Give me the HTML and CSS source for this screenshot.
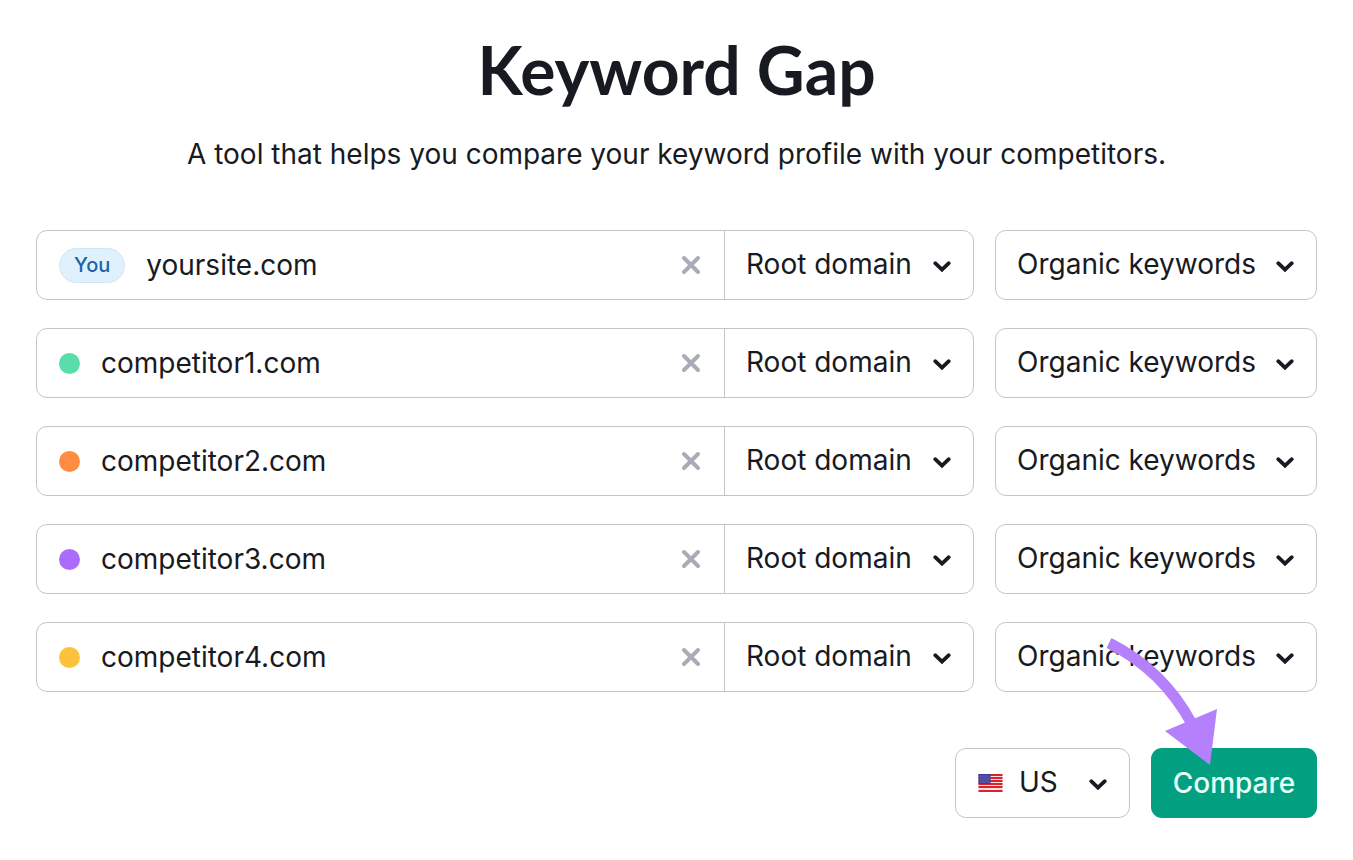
FILE: index.html
```html
<!DOCTYPE html>
<html lang="en">
<head>
    <meta charset="UTF-8">
    <meta name="viewport" content="width=device-width, initial-scale=1.0">
    <title>Keyword Gap</title>
    <link rel="stylesheet" href="styles.css">
</head>
<body>

<!-- shared icons -->
<svg class="sprite" aria-hidden="true">
    <symbol id="icon-close" viewBox="0 0 20 20">
        <path d="M3 3L17 17M17 3L3 17" fill="none" stroke="currentColor" stroke-width="4" stroke-linecap="round"/>
    </symbol>
    <symbol id="icon-chevron" viewBox="0 0 20 14">
        <path d="M3.2 3.2L10 9.6L16.8 3.2" fill="none" stroke="currentColor" stroke-width="3.8" stroke-linecap="round" stroke-linejoin="miter"/>
    </symbol>
</svg>

<main class="container">
    <h1>Keyword Gap</h1>
    <p class="subtitle">A tool that helps you compare your keyword profile with your competitors.</p>

    <form class="gap-form">
        <div class="row">
            <div class="domain">
                <label class="badge" for="domain-you">You</label>
                <input type="text" id="domain-you" value="yoursite.com">
                <button type="button" class="clear" aria-label="Clear"><svg><use href="#icon-close"/></svg></button>
                <div class="select scope">
                    <select aria-label="Scope"><option>Root domain</option></select>
                    <svg class="chevron"><use href="#icon-chevron"/></svg>
                </div>
            </div>
            <div class="select box">
                <select aria-label="Keyword type"><option>Organic keywords</option></select>
                <svg class="chevron"><use href="#icon-chevron"/></svg>
            </div>
        </div>

        <div class="row">
            <div class="domain">
                <label class="dot green" for="domain-1" aria-label="Competitor 1"></label>
                <input type="text" id="domain-1" value="competitor1.com">
                <button type="button" class="clear" aria-label="Clear"><svg><use href="#icon-close"/></svg></button>
                <div class="select scope">
                    <select aria-label="Scope"><option>Root domain</option></select>
                    <svg class="chevron"><use href="#icon-chevron"/></svg>
                </div>
            </div>
            <div class="select box">
                <select aria-label="Keyword type"><option>Organic keywords</option></select>
                <svg class="chevron"><use href="#icon-chevron"/></svg>
            </div>
        </div>

        <div class="row">
            <div class="domain">
                <label class="dot orange" for="domain-2" aria-label="Competitor 2"></label>
                <input type="text" id="domain-2" value="competitor2.com">
                <button type="button" class="clear" aria-label="Clear"><svg><use href="#icon-close"/></svg></button>
                <div class="select scope">
                    <select aria-label="Scope"><option>Root domain</option></select>
                    <svg class="chevron"><use href="#icon-chevron"/></svg>
                </div>
            </div>
            <div class="select box">
                <select aria-label="Keyword type"><option>Organic keywords</option></select>
                <svg class="chevron"><use href="#icon-chevron"/></svg>
            </div>
        </div>

        <div class="row">
            <div class="domain">
                <label class="dot purple" for="domain-3" aria-label="Competitor 3"></label>
                <input type="text" id="domain-3" value="competitor3.com">
                <button type="button" class="clear" aria-label="Clear"><svg><use href="#icon-close"/></svg></button>
                <div class="select scope">
                    <select aria-label="Scope"><option>Root domain</option></select>
                    <svg class="chevron"><use href="#icon-chevron"/></svg>
                </div>
            </div>
            <div class="select box">
                <select aria-label="Keyword type"><option>Organic keywords</option></select>
                <svg class="chevron"><use href="#icon-chevron"/></svg>
            </div>
        </div>

        <div class="row">
            <div class="domain">
                <label class="dot yellow" for="domain-4" aria-label="Competitor 4"></label>
                <input type="text" id="domain-4" value="competitor4.com">
                <button type="button" class="clear" aria-label="Clear"><svg><use href="#icon-close"/></svg></button>
                <div class="select scope">
                    <select aria-label="Scope"><option>Root domain</option></select>
                    <svg class="chevron"><use href="#icon-chevron"/></svg>
                </div>
            </div>
            <div class="select box">
                <select aria-label="Keyword type"><option>Organic keywords</option></select>
                <svg class="chevron"><use href="#icon-chevron"/></svg>
            </div>
        </div>

        <div class="actions">
            <div class="select box country">
                <svg class="flag" viewBox="0 0 24 18" aria-hidden="true">
                    <rect width="24" height="18" fill="#f6dfe2"/>
                    <path d="M0 1H24M0 4H24M0 7H24M0 10H24M0 13H24M0 17H24" stroke="#d8222c" stroke-width="2"/>
                    <rect width="12" height="10" fill="#3a3a98"/>
                    <path d="M1 2H11M2 4H11M1 6H11M2 8H11" stroke="#8f90cf" stroke-dasharray="1 1"/>
                </svg>
                <select aria-label="Country"><option>US</option></select>
                <svg class="chevron"><use href="#icon-chevron"/></svg>
            </div>
            <div class="submit">
                <button type="submit" class="compare">Compare</button>
                <svg class="arrow" viewBox="0 0 125 140" aria-hidden="true">
                    <path d="M9 13Q63 40 92 94" fill="none" stroke="#b580fc" stroke-width="11"/>
                    <path d="M65 101L117 79L110 135Z" fill="#b580fc"/>
                </svg>
            </div>
        </div>
    </form>
</main>

</body>
</html>
```

FILE: styles.css
```css
*{
    box-sizing:border-box;
}
body{
    margin:0;
    background-color:#fff;
    color:#181a22;
    font-family:Inter, "Liberation Sans", sans-serif;
    font-size:28px;
    font-weight:400;
}
.sprite{
    display:none;
}
.container{
    padding:30px 36px;
}
h1{
    margin:0;
    font-family:Lato, Inter, sans-serif;
    font-size:66px;
    font-weight:700;
    line-height:80px;
    text-align:center;
}
.subtitle{
    margin:24px 0 56px;
    line-height:40px;
    text-align:center;
}
input, select, button{
    padding:0;
    border:none;
    background:none;
    color:inherit;
    font:inherit;
}
.gap-form{
    display:flex;
    flex-direction:column;
    gap:28px;
}
.row{
    display:grid;
    grid-template-columns:1fr 322px;
    gap:21px;
}
.domain, .box{
    height:70px;
    border:1px solid #c4c5ca;
    border-radius:11px;
}
.domain{
    display:flex;
    align-items:center;
    padding-left:22px;
}
.domain input{
    flex:1;
    min-width:0;
    margin-left:21px;
}
.badge{
    padding:0 14px;
    border:1px solid #cfe6f7;
    border-radius:18px;
    background-color:#e0f1fe;
    color:#1c62a8;
    font-size:20px;
    font-weight:500;
    line-height:33px;
}
.dot{
    width:21px;
    height:21px;
    border-radius:50%;
}
.green{
    background-color:#59ddaa;
}
.orange{
    background-color:#ff8c43;
}
.purple{
    background-color:#ab6cfe;
}
.yellow{
    background-color:#fdc23c;
}
.clear{
    display:flex;
    margin:0 23px;
    color:#a9abb6;
    cursor:pointer;
}
.clear svg{
    width:20px;
    height:20px;
}
.select{
    position:relative;
    display:flex;
    align-items:center;
}
.select select{
    width:100%;
    height:100%;
    padding:0 50px 2px 21px;
    appearance:none;
    cursor:pointer;
}
.scope{
    width:249px;
    height:100%;
    border-left:1px solid #c4c5ca;
}
/* sits over the right end of the select */
.chevron{
    position:absolute;
    right:21px;
    top:calc(50% - 5px);
    width:20px;
    height:14px;
    pointer-events:none;
}
.actions{
    display:flex;
    justify-content:flex-end;
    gap:21px;
    margin-top:28px;
}
.country{
    width:175px;
    padding-left:22px;
}
.country select{
    padding-left:16px;
}
.flag{
    flex:none;
    width:25px;
    height:18px;
}
.submit{
    position:relative;
}
.compare{
    width:166px;
    height:70px;
    border-radius:11px;
    background-color:#029f81;
    color:#e6fff8;
    font-weight:500;
    cursor:pointer;
}
.compare:hover{
    background-color:#018a70;
}
.arrow{
    position:absolute;
    right:92px;
    top:-118px;
    width:125px;
    height:140px;
    pointer-events:none;
}
```
